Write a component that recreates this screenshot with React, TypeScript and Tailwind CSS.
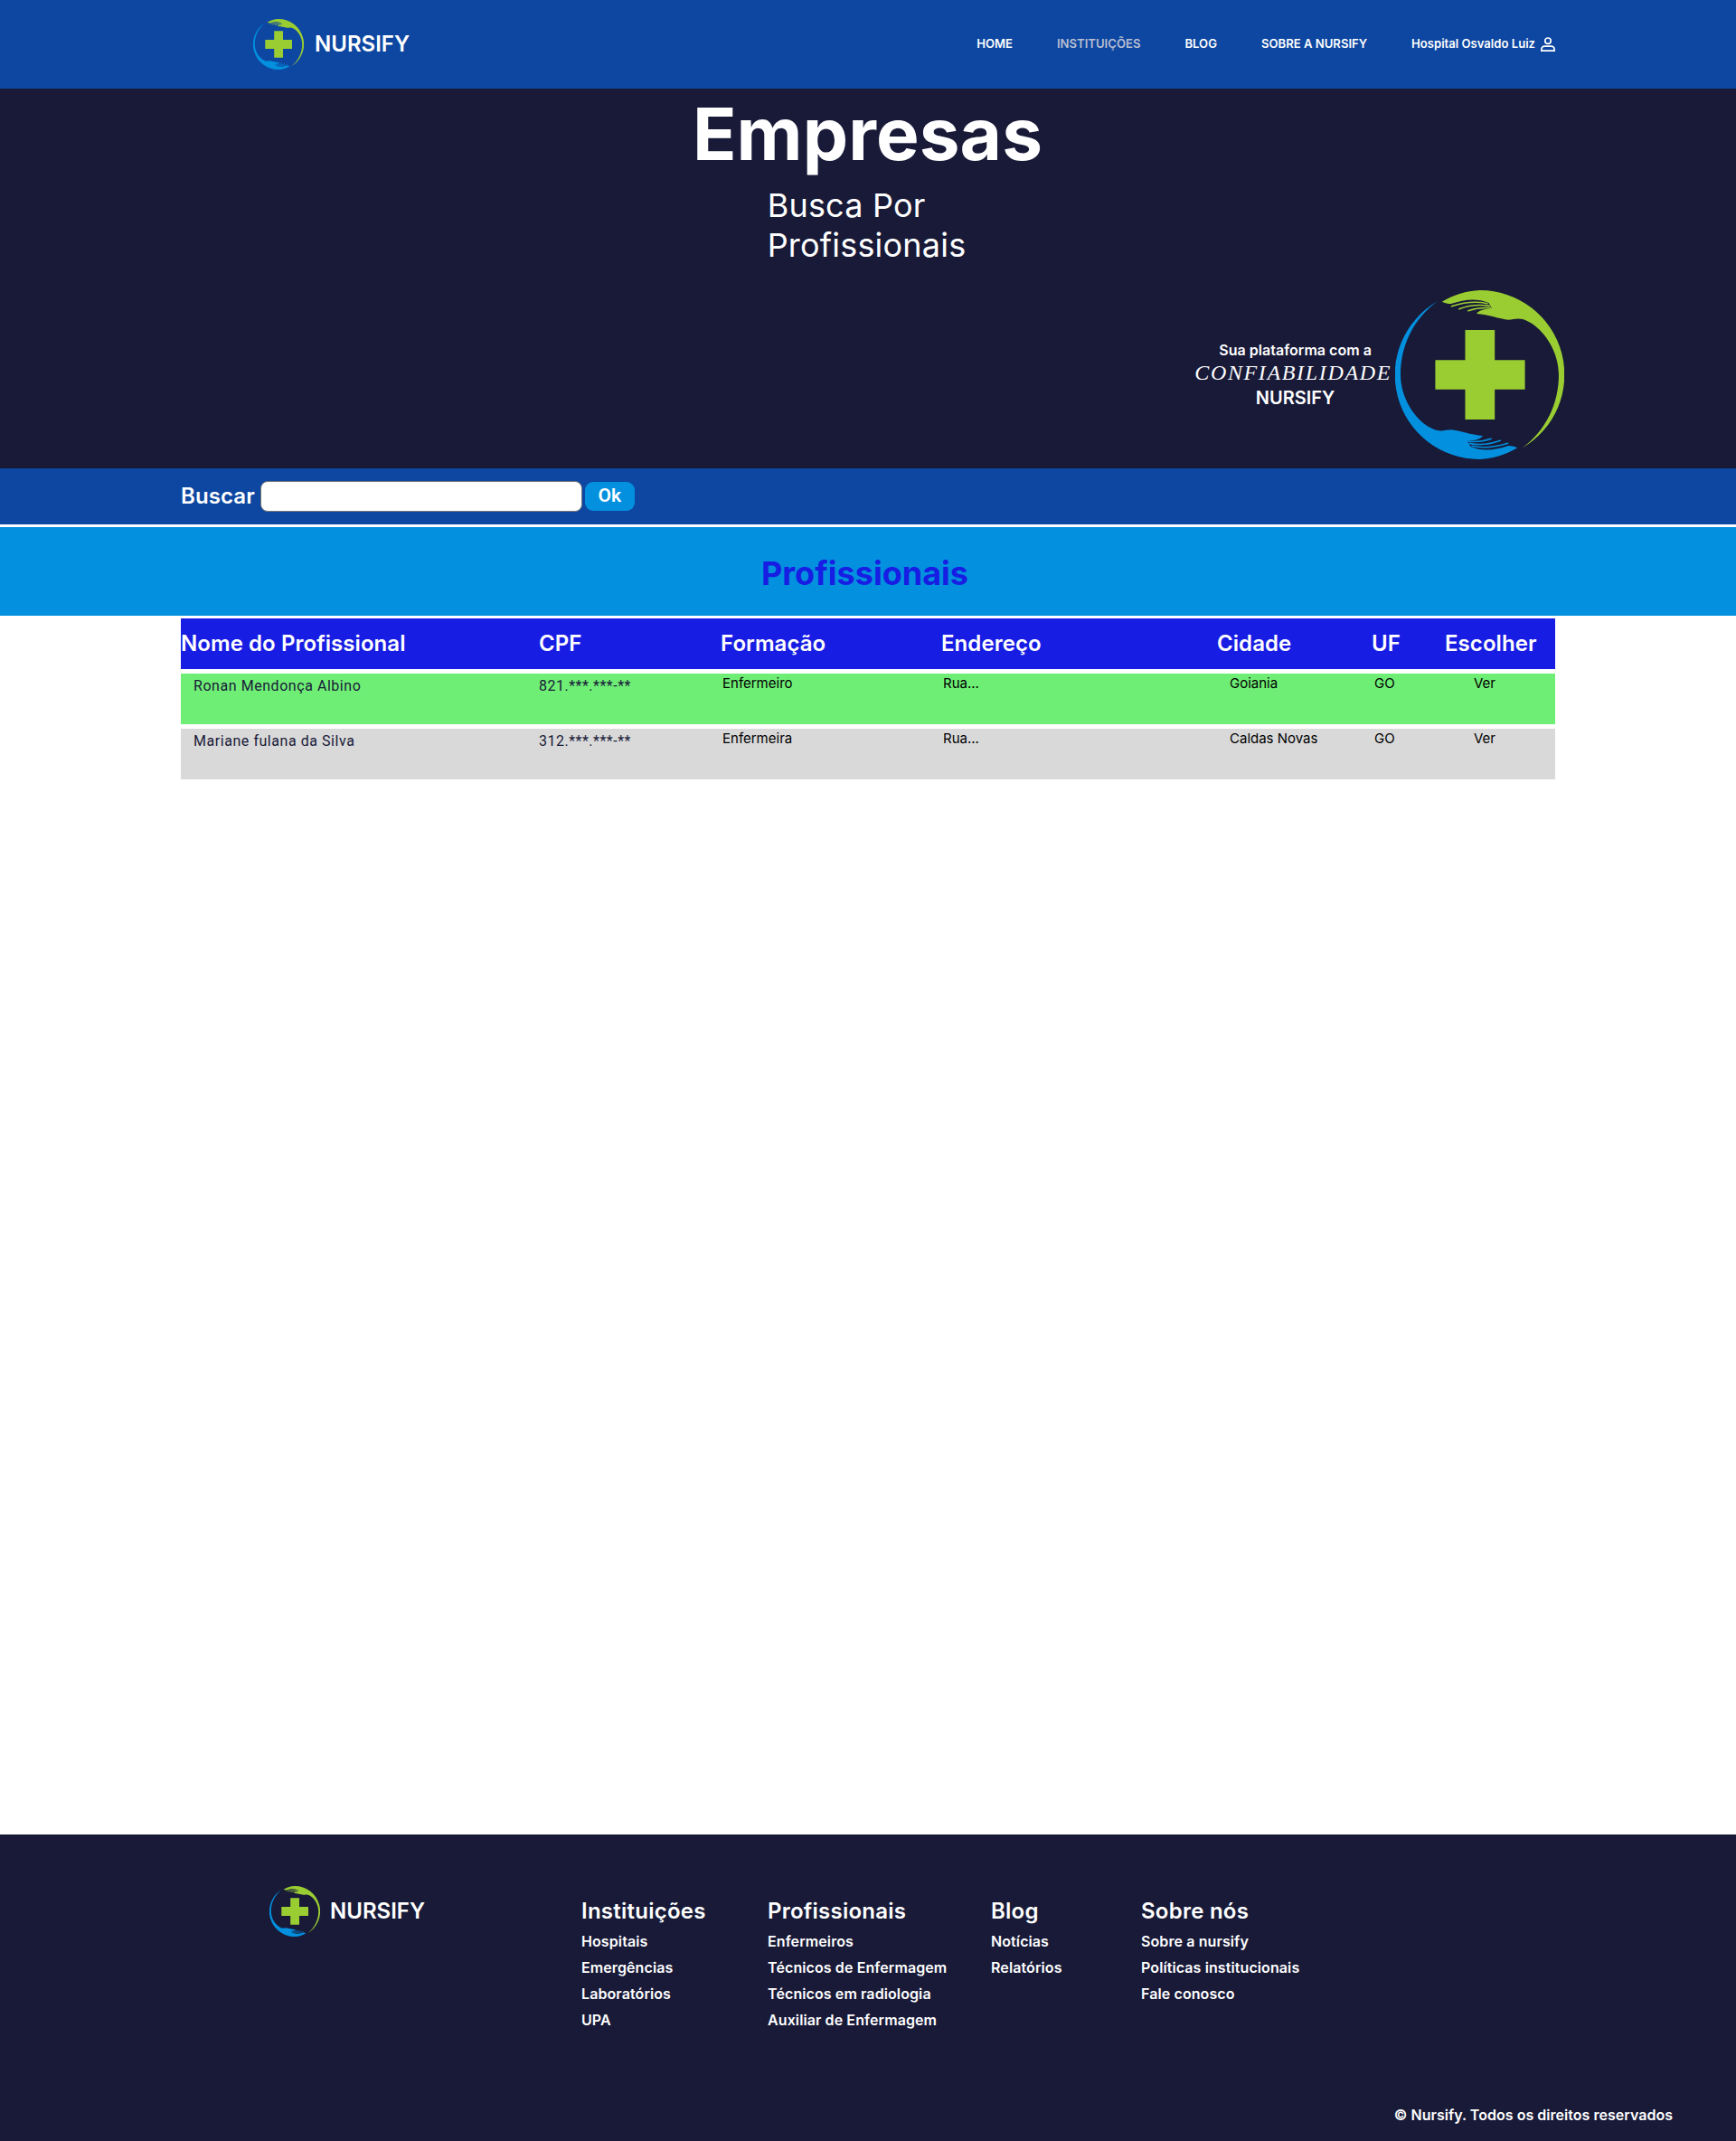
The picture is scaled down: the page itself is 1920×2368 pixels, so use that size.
const navLinks = ['HOME', 'INSTITUIÇÕES', 'BLOG', 'SOBRE A NURSIFY'];

const columns = ['Nome do Profissional', 'CPF', 'Formação', 'Endereço', 'Cidade', 'UF', 'Escolher'];

const professionals = [
  { name: 'Ronan Mendonça Albino', cpf: '821.***.***-**', formacao: 'Enfermeiro', cidade: 'Goiania', bg: 'bg-[#6fee76]' },
  { name: 'Mariane fulana da Silva', cpf: '312.***.***-**', formacao: 'Enfermeira', cidade: 'Caldas Novas', bg: 'bg-[#d9d9d9]' },
];

const footerColumns = [
  { title: 'Instituições', width: 'w-[206px]', links: ['Hospitais', 'Emergências', 'Laboratórios', 'UPA'] },
  { title: 'Profissionais', width: 'w-[247px]', links: ['Enfermeiros', 'Técnicos de Enfermagem', 'Técnicos em radiologia', 'Auxiliar de Enfermagem'] },
  { title: 'Blog', width: 'w-[166px]', links: ['Notícias', 'Relatórios'] },
  { title: 'Sobre nós', width: 'w-[220px]', links: ['Sobre a nursify', 'Políticas institucionais', 'Fale conosco'] },
];

const gridCols = 'grid grid-cols-[396px_201px_244px_305px_171px_81px_122px]';

function Hand({ color }: { color: string }) {
  return (
    <g>
      <path
        fill={color}
        d="M885 103C925 80 965 67 1010 65A280 280 0 0 1 1150 588C1230 530 1272 440 1272 345C1272 270 1225 195 1170 168C1140 152 1125 163 1105 163C1075 160 1040 146 1000 143C1005 132 1025 128 1050 125L1040 107C1000 90 960 95 915 110C905 110 895 108 885 103Z"
      />
      <g stroke={color} strokeWidth="5" fill="none" strokeLinecap="round">
        <path d="M917 118C955 106 1000 101 1035 109" />
        <path d="M942 127C970 116 1010 112 1042 117" />
        <path d="M972 133C995 125 1020 122 1046 124" />
      </g>
    </g>
  );
}

function Logo({ className }: { className: string }) {
  return (
    <svg viewBox="730 65 560 560" className={className}>
      <Hand color="#9acd32" />
      <g transform="rotate(180 1010 345)">
        <Hand color="#0390de" />
      </g>
      <path fill="#9acd32" d="M962 197H1060V296H1160V394H1060V493H962V394H863V296H962Z" />
    </svg>
  );
}

export default function App() {
  return (
    <div className="w-[1920px] h-[2368px] flex flex-col bg-white text-white font-['Inter',sans-serif]">
      <header className="h-[98px] shrink-0 bg-[#0d47a1] flex items-center pl-[280px] pr-[200px]">
        <Logo className="w-[56px] h-[56px] mt-[-1px]" />
        <span className="ml-[12px] text-[24px] font-semibold">NURSIFY</span>
        <nav className="ml-auto flex items-center gap-[49px] text-[13.1px] font-semibold">
          {navLinks.map((link) => (
            <a key={link} className={link === 'INSTITUIÇÕES' ? 'text-[#b9bfd2]' : ''}>
              {link}
            </a>
          ))}
          <a className="flex items-center gap-[6px]">
            Hospital Osvaldo Luiz
            <svg viewBox="0 0 16 16" className="w-[16px] h-[16px]" fill="none" stroke="currentColor" strokeWidth="1.7">
              <circle cx="8" cy="4.2" r="3.2" />
              <path d="M.9 15.2V13.6a3.4 3.4 0 0 1 3.4-3.4h7.4a3.4 3.4 0 0 1 3.4 3.4v1.6Z" />
            </svg>
          </a>
        </nav>
      </header>

      <section className="h-[420px] shrink-0 bg-[#181a38] flex flex-col">
        <h1 className="text-center text-[80px] leading-[100px] font-bold tracking-[0.1px] pr-[1px]">Empresas</h1>
        <p className="w-fit mx-auto mt-[7px] pr-[3px] text-[36px] leading-[44px] tracking-[0.2px]">
          Busca Por
          <br />
          Profissionais
        </p>
        <div className="mt-[28px] flex items-center justify-end gap-[4px] pr-[190px]">
          <div className="flex flex-col items-center pb-[2px]">
            <span className="pl-[5px] text-[16px] leading-[24px] font-semibold tracking-[0.03px]">Sua plataforma com a</span>
            <span className="font-['Liberation_Serif',serif] italic text-[24px] leading-[26px] tracking-[1.65px]">CONFIABILIDADE</span>
            <span className="pl-[5px] mt-[3px] text-[20px] leading-[24px] font-semibold">NURSIFY</span>
          </div>
          <Logo className="w-[187px] h-[187px]" />
        </div>
      </section>

      <form className="h-[62px] shrink-0 bg-[#0d47a1] flex items-center pl-[200px]">
        <label className="text-[24px] font-semibold tracking-[0.1px]">Buscar</label>
        <input className="ml-[6px] w-[356px] h-[34px] bg-white rounded-[8px] border border-[#767676]" />
        <button type="button" className="ml-[3px] w-[55px] h-[32px] rounded-[9px] bg-[#0390de] text-[21px] font-semibold font-['Roboto',sans-serif]">
          Ok
        </button>
      </form>

      <div className="mt-[3px] h-[98px] shrink-0 bg-[#0390de] flex items-center justify-center pr-[7px] pt-[3px]">
        <h2 className="text-[36px] font-bold text-[#181de3]">Profissionais</h2>
      </div>

      <main className="flex-1 pt-[3px] px-[200px]">
        <div className={`${gridCols} h-[56px] items-center bg-[#181de3] text-[24px] font-semibold tracking-[0.07px]`}>
          {columns.map((column) => (
            <div key={column}>{column}</div>
          ))}
        </div>
        {professionals.map((p) => (
          <div key={p.name} className={`${gridCols} mt-[5px] h-[56px] ${p.bg} text-[15px] leading-[20px] text-black`}>
            <div className="pl-[14px] pt-[2px] font-['Roboto',sans-serif] text-[16px] leading-[24px] tracking-[0.55px] text-[#181a38]">{p.name}</div>
            <div className="pt-[2px] font-['Roboto',sans-serif] text-[16px] leading-[24px] tracking-[0.5px] text-[#181a38]">{p.cpf}</div>
            <div className="pl-[2px] pt-[1px]">{p.formacao}</div>
            <div className="pl-[2px] pt-[1px]">Rua...</div>
            <div className="pl-[14px] pt-[1px]">{p.cidade}</div>
            <div className="pl-[3px] pt-[1px]">GO</div>
            <div className="pl-[32px] pt-[1px]">Ver</div>
          </div>
        ))}
      </main>

      <footer className="h-[339px] shrink-0 bg-[#181a38] flex flex-col justify-between pt-[57px] pb-[17px]">
        <div className="flex pl-[298px]">
          <div className="w-[345px] flex items-start">
            <Logo className="w-[56px] h-[56px]" />
            <span className="ml-[11px] mt-[12px] text-[24px] leading-[32px] font-semibold">NURSIFY</span>
          </div>
          {footerColumns.map((col) => (
            <div key={col.title} className={`${col.width} mt-[12px]`}>
              <h3 className="text-[24px] leading-[32px] font-semibold mb-[3px] tracking-[0.25px]">{col.title}</h3>
              {col.links.map((link) => (
                <a key={link} className="block text-[16px] leading-[29px] font-semibold tracking-[0.1px]">
                  {link}
                </a>
              ))}
            </div>
          ))}
        </div>
        <p className="text-right pr-[70px] text-[16px] leading-[24px] font-semibold tracking-[0.03px]">© Nursify. Todos os direitos reservados</p>
      </footer>
    </div>
  );
}
